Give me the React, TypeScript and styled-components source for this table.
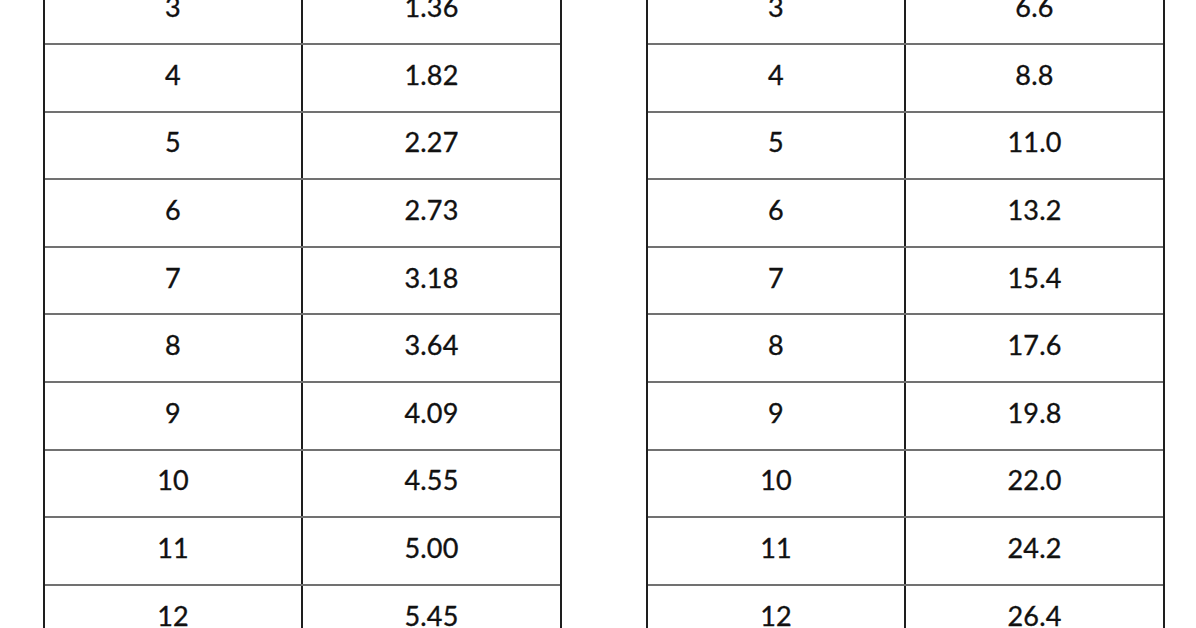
import styled, { createGlobalStyle } from "styled-components"

const GlobalStyle = createGlobalStyle`
    html, body {
        margin: 0;
        padding: 0;
        background: #ffffff;
    }
    body {
        font-family: Lato, "Liberation Sans", sans-serif;
    }
`

const Page = styled.div`
    width: 1196px;
    height: 628px;
    overflow: hidden;
    background: #fff;
`

const Tables = styled.div`
    display: flex;
    gap: 84px;
    margin-top: -22.5px;
    padding-left: 43px;
`

const Table = styled.div`
    width: 519px;
    box-sizing: border-box;
    border-left: 2px solid #1e1e1e;
    border-right: 2px solid #1e1e1e;
`

const Row = styled.div`
    display: grid;
    grid-template-columns: 258px 1fr;
    height: 67.6px;
    box-sizing: border-box;
    border-bottom: 2px solid #717171;
`

const Cell = styled.div<{ $divider?: boolean }>`
    display: flex;
    align-items: center;
    justify-content: center;
    padding-bottom: 7px;
    font-size: 27px;
    color: #111;
    letter-spacing: 0.2px;
    -webkit-text-stroke: 0.35px #111;
    border-right: ${p => (p.$divider ? "2px solid #1e1e1e" : "none")};
`

const left: [string, string][] = [
    ["3", "1.36"],
    ["4", "1.82"],
    ["5", "2.27"],
    ["6", "2.73"],
    ["7", "3.18"],
    ["8", "3.64"],
    ["9", "4.09"],
    ["10", "4.55"],
    ["11", "5.00"],
    ["12", "5.45"],
]

const right: [string, string][] = [
    ["3", "6.6"],
    ["4", "8.8"],
    ["5", "11.0"],
    ["6", "13.2"],
    ["7", "15.4"],
    ["8", "17.6"],
    ["9", "19.8"],
    ["10", "22.0"],
    ["11", "24.2"],
    ["12", "26.4"],
]

const DataTable = ({ rows }: { rows: [string, string][] }) => (
    <Table>
        {rows.map(([a, b]) => (
            <Row key={a}>
                <Cell $divider>{a}</Cell>
                <Cell>{b}</Cell>
            </Row>
        ))}
    </Table>
)

const App = () => {
    return (
        <Page>
            <GlobalStyle />
            <Tables>
                <DataTable rows={left} />
                <DataTable rows={right} />
            </Tables>
        </Page>
    )
}

export default App
